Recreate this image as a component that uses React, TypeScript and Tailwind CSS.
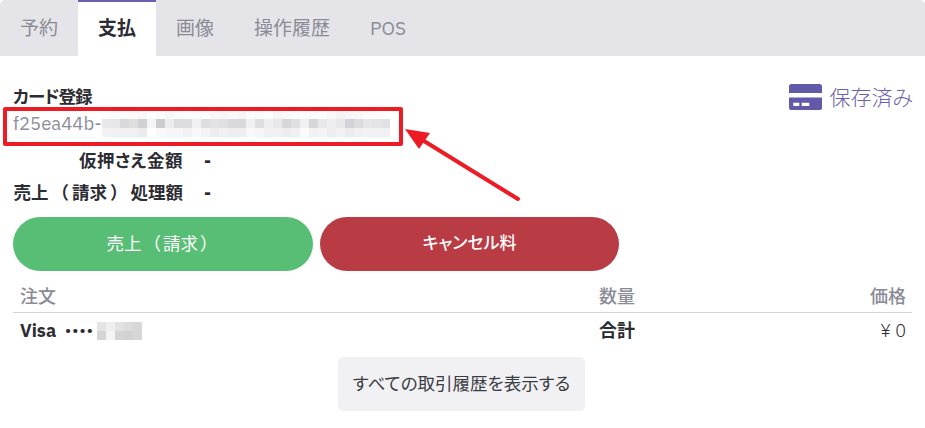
const FONT = "font-['IBM_Plex_Sans','Inter','Noto_Sans_CJK_JP',sans-serif]"

const tabs = ['予約', '支払', '画像', '操作履歴', 'POS']

const idMosaic = [
  ['fdfdfd', 'fbfbfb', 'fbfbfc', 'fafafa', 'f8f8f9', 'fefefe', 'fafbfb', 'f6f8f8', 'fbfbfb', 'fcfcfc', 'fbfbfb', 'fcfcfc', 'f8f8f8', 'f6f6f6', 'f9f9f9', 'f6f6f7', 'fdfdfd', 'fafafa', 'fcfcfc', 'f6f6f6', 'fafafa', 'fbfbfb', 'fdfdfd', 'fbfbfb', 'fcfcfc', 'f8f8f8', 'f3f3f4', 'f7f7f8', 'f8f8f8', 'fbfbfb', 'fcfcfc', 'fefefe'],
  ['e8e8ea', 'e6e6e8', 'd8d8dd', 'dededf', 'd0d0d5', 'f4f4f5', 'cbcbd0', 'ececee', 'dcdce0', 'dcdcdf', 'f0f0f2', 'dcdce1', 'e2e2e5', 'e0e0e3', 'd9d9dd', 'd9d9dd', 'f0f0f2', 'dddde2', 'eeeef0', 'e8e8ea', 'd5d5da', 'e0e0e3', 'f0f0f2', 'd5d5da', 'e8e8ea', 'eeeef0', 'e8e8ea', 'd2d2d8', 'dcdce0', 'e6e6e9', 'e4e4e6', 'e2e2e4'],
  ['f2f2f3', 'f0f0f1', 'f0f0f1', 'f0f0f1', 'ebebec', 'ffffff', 'f8f8f8', 'f6f6f6', 'f6f6f6', 'f2f2f4', 'f8f8f8', 'f4f4f5', 'ededee', 'f1f1f2', 'eeeeef', 'eeeeef', 'f8f8f8', 'f6f6f6', 'f0f0f1', 'f1f1f2', 'ecedee', 'eff0f1', 'fbfbfb', 'f1f1f2', 'f4f4f5', 'eeeeef', 'f2f2f3', 'ebebec', 'f0f0f1', 'f2f2f3', 'f2f2f3', 'f1f1f2'],
]

const cardMosaic = [
  ['e4e4e4', 'efefef', 'e2e2e2', 'dcdcdc', 'd8d8d8'],
  ['d6d6d6', 'f4f4f4', 'd4d4d4', 'd2d2d2', 'd6d6d6'],
]

function Mosaic({ rows, width, height }: { rows: string[][]; width: number; height: number }) {
  return (
    <svg width={width} height={height} viewBox={`0 0 ${width} ${height}`} className="block shrink-0" shapeRendering="crispEdges">
      {rows.map((row, y) =>
        row.map((c, x) => <rect key={`${x}-${y}`} x={x * 9} y={y * 9} width={9} height={9} fill={`#${c}`} />),
      )}
    </svg>
  )
}

function CardIcon() {
  return (
    <svg width="33" height="26" viewBox="0 0 33 26" className="shrink-0">
      <path d="M2.5 0h28A2.5 2.5 0 0 1 33 2.5V9H0V2.5A2.5 2.5 0 0 1 2.5 0Z" fill="#6259a8" />
      <path
        fillRule="evenodd"
        d="M0 13.5h33V24a2 2 0 0 1-2 2H2a2 2 0 0 1-2-2ZM4.3 18.7v3.3h6v-3.3ZM12.7 18.7v3.3h7.6v-3.3Z"
        fill="#6259a8"
      />
    </svg>
  )
}

export default function App() {
  return (
    <div className={`relative h-[428px] w-[925px] overflow-hidden bg-white [font-feature-settings:'palt'] [text-spacing-trim:space-all] ${FONT}`}>
      <div className="flex h-14 rounded-t-[5px] bg-[#e4e4e9]">
        {tabs.map((t) => (
          <div
            key={t}
            className={
              t === '支払'
                ? 'flex items-center border-t-2 border-[#6a5fae] bg-white px-5 pb-[2px] text-[19px] font-bold text-[#2c2c33]'
                : 'flex items-center px-5 text-[19px] text-[#8b8b96]'
            }
          >
            {t}
          </div>
        ))}
      </div>

      <div className="px-[13px]">
        <div className="flex items-start justify-between pt-[28px]">
          <div>
            <div className="mb-[1px] pt-[1px] text-[17.5px] leading-[24px] font-bold tracking-[-1px] text-[#2c2c33]">カード登録</div>
            <div className="flex h-[27px] items-center text-[18.5px] text-[#8e8e9a]">
              <span>f25ea44b-</span>
              <Mosaic rows={idMosaic} width={288} height={27} />
            </div>
          </div>
          <div className="-mr-[1px] flex items-start gap-[7px] text-[21px] leading-[26px] font-light text-[#6a5fae]">
            <CardIcon />
            <span>保存済み</span>
          </div>
        </div>

        <div className="mt-[8px] flex flex-col text-[17.5px] font-bold text-[#2c2c33]">
          <div className="flex h-8 items-center">
            <span className="w-[170px] text-right tracking-[0.5px]">仮押さえ金額</span>
            <span className="ml-[21px]">-</span>
          </div>
          <div className="flex h-8 items-center">
            <span className="w-[170px] text-right whitespace-nowrap">
              売上<span className="mx-[3px] [font-feature-settings:normal]">（</span>請求<span className="mx-[3px] [font-feature-settings:normal]">）</span>処理額
            </span>
            <span className="ml-[21px]">-</span>
          </div>
        </div>

        <div className="mt-2 flex gap-[7px]">
          <button type="button" className="h-[54px] w-[300px] rounded-[27px] bg-[#58be75] text-[17.5px] text-white">
            売上<span className="mx-[2px] [font-feature-settings:normal]">（</span>請求<span className="mx-[2px] [font-feature-settings:normal]">）</span>
          </button>
          <button type="button" className="h-[54px] w-[299px] rounded-[27px] bg-[#b93b44] text-[17px] font-medium text-white">
            キャンセル料
          </button>
        </div>

        <div className="mt-[10px] flex h-[32px] items-center border-b border-[#d4d4d8] pr-[6px] pb-[1px] pl-[7px] text-[18px] font-medium text-[#8b8b96]">
          <span className="w-[579px]">注文</span>
          <span>数量</span>
          <span className="ml-auto">価格</span>
        </div>
        <div className="flex h-[36px] items-center pr-[6px] pb-[1px] pl-[7px] text-[18px] text-[#2c2c33]">
          <div className="flex w-[579px] items-center font-bold">
            <span>Visa</span>
            <span className="ml-[9px] text-[13px] tracking-[1.7px]">••••</span>
            <span className="ml-[3px]">
              <Mosaic rows={cardMosaic} width={45} height={18} />
            </span>
          </div>
          <span className="font-bold">合計</span>
          <span className="ml-auto font-light">¥ 0</span>
        </div>

        <div className="mt-2 flex justify-center pr-[2px]">
          <button type="button" className="h-[54px] w-[247px] rounded-[5px] bg-[#f1f1f3] text-[17.5px] text-[#3c3c44]">
            すべての取引履歴を表示する
          </button>
        </div>
      </div>

      {/* annotation on top of the screenshot */}
      <div className="absolute top-[107px] left-[3px] h-[39px] w-[400px] rounded-[2px] border-[4px] border-[#ed1c24]" />
      <svg width="925" height="428" viewBox="0 0 925 428" className="pointer-events-none absolute top-0 left-0">
        <line x1="518" y1="199" x2="424" y2="141" stroke="#ed1c24" strokeWidth="4" strokeLinecap="round" />
        <polygon points="405,129 430,133 419,149" fill="#ed1c24" />
      </svg>
    </div>
  )
}
